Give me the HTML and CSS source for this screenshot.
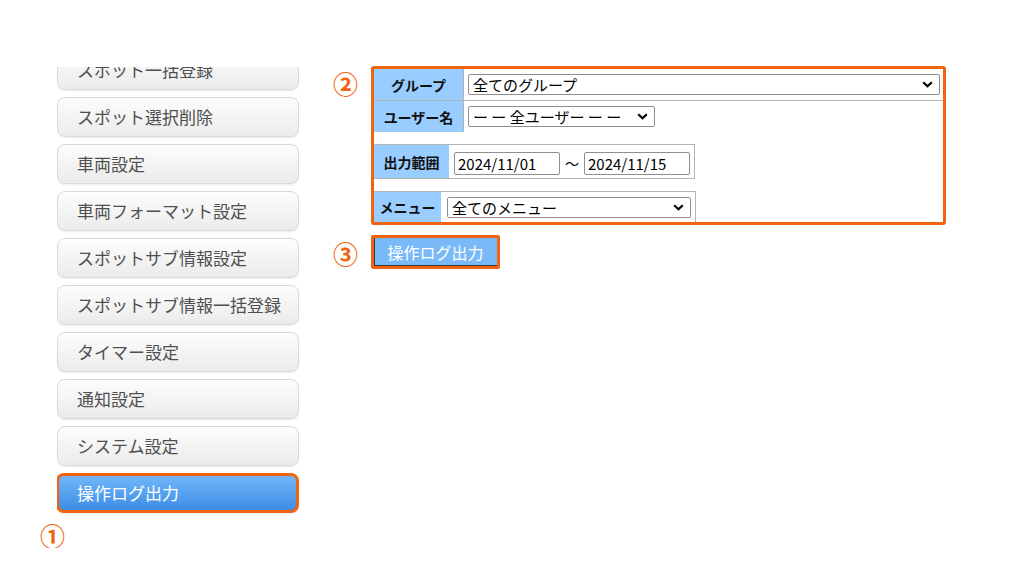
FILE: index.html
```html
<!DOCTYPE html>
<html>
	<head>
		<meta charset="utf-8" />
		<title>操作ログ出力</title>
		<link rel="stylesheet" href="styles.css">
	</head>
	<body>
		<div id="page">
			<div id="side">
				<div class="menu-clip">
					<ul class="menu">
						<li>スポット一括登録</li>
						<li>スポット選択削除</li>
						<li>車両設定</li>
						<li>車両フォーマット設定</li>
						<li>スポットサブ情報設定</li>
						<li>スポットサブ情報一括登録</li>
						<li>タイマー設定</li>
						<li>通知設定</li>
						<li>システム設定</li>
						<li class="active">操作ログ出力</li>
					</ul>
				</div>
				<div class="mark mark-side">①</div>
			</div>

			<div id="main">
				<div class="step">
					<span class="mark">②</span>
					<div class="form-box">
						<table class="t1">
							<tr>
								<th>グループ</th>
								<td>
									<div class="select sel-group">
										<span>全てのグループ</span>
										<svg width="11" height="7" viewBox="0 0 11 7"><path d="M1.2 1.2 L5.5 5.3 L9.8 1.2" fill="none" stroke="#000" stroke-width="2.2"/></svg>
									</div>
								</td>
							</tr>
							<tr>
								<th>ユーザー名</th>
								<td>
									<div class="select sel-user">
										<span>ー ー 全ユーザー ー ー</span>
										<svg width="11" height="7" viewBox="0 0 11 7"><path d="M1.2 1.2 L5.5 5.3 L9.8 1.2" fill="none" stroke="#000" stroke-width="2.2"/></svg>
									</div>
								</td>
							</tr>
						</table>

						<table class="t2">
							<tr>
								<th>出力範囲</th>
								<td>
									<input type="text" class="date" value="2024/11/01"><span class="tilde">～</span><input type="text" class="date" value="2024/11/15">
								</td>
							</tr>
						</table>

						<table class="t3">
							<tr>
								<th>メニュー</th>
								<td>
									<div class="select sel-menu">
										<span>全てのメニュー</span>
										<svg width="11" height="7" viewBox="0 0 11 7"><path d="M1.2 1.2 L5.5 5.3 L9.8 1.2" fill="none" stroke="#000" stroke-width="2.2"/></svg>
									</div>
								</td>
							</tr>
						</table>
					</div>
				</div>

				<div class="step step-btn">
					<span class="mark">③</span>
					<button class="out-btn">操作ログ出力</button>
				</div>
			</div>
		</div>
	</body>
</html>
```

FILE: styles.css
```css
*{
	padding: 0;
	margin: 0;
}
ul{
	list-style: none;
}
body{
	font-family: "Noto Sans CJK JP", "Noto Sans", sans-serif;
	background: #fff;
}
#page{
	display: flex;
	padding: 66px 0 0 57px;
}

/*左メニュー*/
#side{
	width: 242px;
	padding-top: 1px;
}
.menu-clip{
	overflow: hidden;
}
.menu{
	margin-top: -17px;
}
.menu li{
	height: 40px;
	box-sizing: border-box;
	border: 1px solid #d9d9d9;
	border-radius: 8px;
	background: linear-gradient(#fdfdfd, #ebebeb);
	box-shadow: 0 1px 2px rgba(0, 0, 0, .08);
	margin-bottom: 7px;
	padding-left: 19px;
	line-height: 37px;
	font-size: 17px;
	color: #4f4f4f;
}
.menu li.active{
	border: 3px solid #f0640f;
	background: linear-gradient(#72b6f9, #3c8de6);
	color: #fff;
	margin-left: -1px;
	padding-left: 18px;
	line-height: 33px;
}

/*丸数字*/
.mark{
	display: block;
	width: 38px;
	color: #f0640f;
	font-size: 25px;
	font-weight: bold;
	line-height: 25px;
	flex-shrink: 0;
}
.mark-side{
	margin: 3px 0 0 -17px;
}

/*右側フォーム*/
#main{
	margin-left: 34px;
}
.step{
	display: flex;
	align-items: flex-start;
}
.step .mark{
	margin-top: 5px;
}
.form-box{
	width: 569px;
	border: 3px solid #f0640f;
	border-radius: 3px;
}
table{
	border-collapse: collapse;
}
th{
	background-color: #99ccff;
	font-size: 14px;
	font-weight: bold;
	color: #111;
	text-align: center;
	padding: 0;
}

/*セレクト風の枠*/
.select{
	display: flex;
	align-items: center;
	justify-content: space-between;
	box-sizing: border-box;
	height: 21px;
	padding: 0 6px 0 4px;
	border: 1px solid #8f8f8f;
	border-radius: 2px;
	background: #fff;
	font-size: 15px;
	line-height: 19px;
	color: #000;
	white-space: nowrap;
}
.sel-group{
	width: 472px;
}
.sel-user{
	width: 187px;
}
.sel-menu{
	width: 244px;
}
input{
	font-family: "Noto Sans CJK JP", "Noto Sans", sans-serif;
	color: #000;
	vertical-align: middle;
}
.t1{
	width: 100%;
	border-style: hidden;
}
.t1 th, .t1 td{
	border: 1px solid #b4b4b4;
	height: 31px;
}
.t1 th{
	width: 89px;
}
.t1 td{
	padding: 0 0 0 4px;
}
.t2, .t3{
	margin-top: 12px;
	border: 1px solid #b4b4b4;
	border-left: 0;
}
.t2 th{
	width: 75px;
	height: 33px;
}
.t2 td{
	padding: 0 4px 0 5px;
}
.date{
	width: 106px;
	height: 23px;
	box-sizing: border-box;
	padding: 0 3px;
	font-size: 15px;
	border: 1px solid #8f8f8f;
	border-radius: 2px;
}
.tilde{
	display: inline-block;
	width: 24px;
	text-align: center;
	font-size: 14px;
	vertical-align: middle;
}
.t3{
	border-bottom: 0;
}
.t3 th{
	width: 67px;
	height: 30px;
}
.t3 td{
	padding: 0 4px 0 6px;
}

/*出力ボタン*/
.step-btn{
	margin-top: 10px;
}
.step-btn .mark{
	margin-top: 6px;
}
.out-btn{
	width: 129px;
	height: 34px;
	border: 3px solid #f0640f;
	border-radius: 2px;
	background-color: #79b9f8;
	box-shadow: inset 1px -1px 0 #3a3a3a;
	color: #fff;
	font-family: "Noto Sans CJK JP", "Noto Sans", sans-serif;
	font-size: 16px;
}
```
